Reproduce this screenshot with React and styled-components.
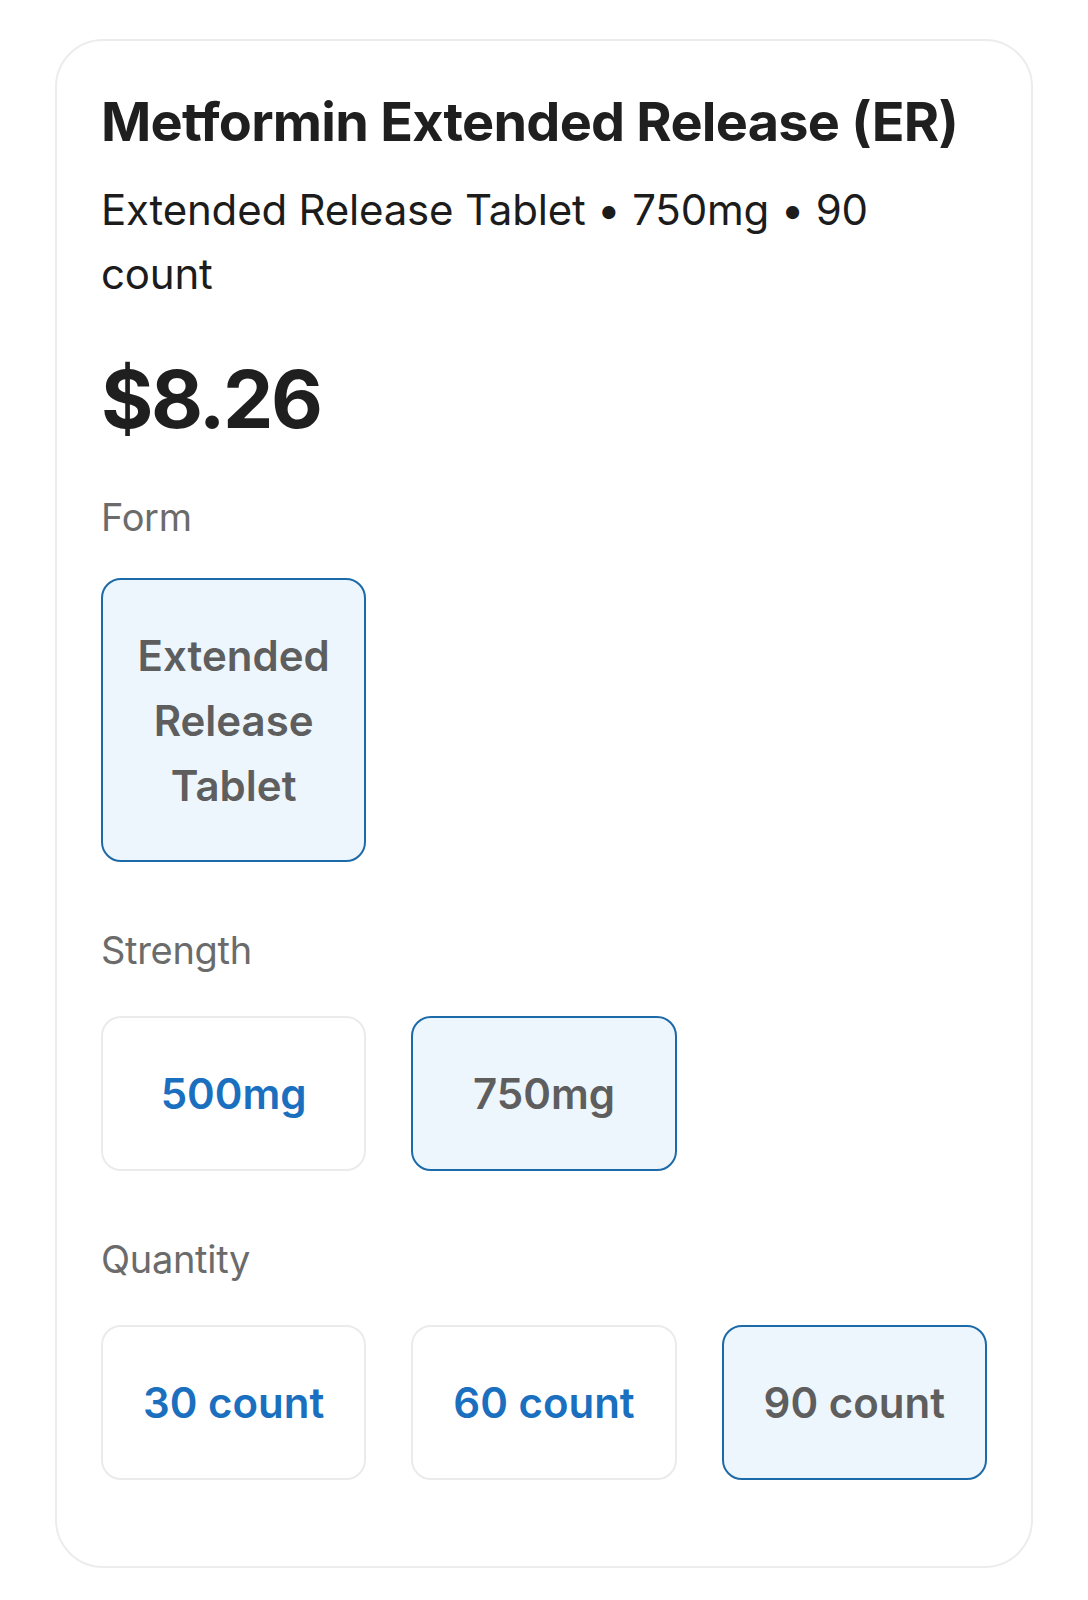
import React from "react";
import styled, { createGlobalStyle } from "styled-components";

const Global = createGlobalStyle`
  html, body { margin: 0; padding: 0; background: #ffffff; }
  body { font-family: Inter, "Noto Sans", sans-serif; -webkit-font-smoothing: antialiased; }
  * { box-sizing: border-box; }
`;

const Page = styled.div`
  padding: 39px 55px 32px 55px;
`;

const Card = styled.section`
  width: 978px;
  border: 2px solid #ececec;
  border-radius: 48px;
  padding: 48px 44px 86px 44px;
  background: #fff;
`;

const Title = styled.h1`
  margin: 0;
  font-size: 54px;
  line-height: 66px;
  font-weight: 700;
  letter-spacing: -0.75px;
  color: #1f1f1f;
`;

const Subtitle = styled.p`
  margin: 23px 0 0;
  max-width: 800px;
  font-size: 42px;
  line-height: 64px;
  font-weight: 400;
  letter-spacing: -0.2px;
  color: #1c1c1c;
`;

const Price = styled.div`
  margin-top: 45px;
  font-size: 80px;
  line-height: 96px;
  font-weight: 700;
  letter-spacing: -2.5px;
  color: #1f1f1f;
`;

const Label = styled.div`
  margin-top: ${(p) => p.$top}px;
  font-size: 38px;
  line-height: 48px;
  font-weight: 400;
  letter-spacing: -0.3px;
  color: #6b6b6b;
`;

const Options = styled.div`
  margin-top: ${(p) => p.$top}px;
  display: grid;
  grid-template-columns: repeat(3, 1fr);
  column-gap: 45px;
`;

const Option = styled.button`
  height: ${(p) => p.$h}px;
  border-radius: 20px;
  border: 2px solid ${(p) => (p.$active ? "#1d6aa8" : "#ebebeb")};
  background: ${(p) => (p.$active ? "#eef6fd" : "#ffffff")};
  color: ${(p) => (p.$active ? "#5e5e5e" : "#1a6fbf")};
  font-family: Inter, "Noto Sans", sans-serif;
  font-size: ${(p) => p.$fs}px;
  line-height: 65px;
  font-weight: 600;
  padding: 0 20px;
  display: flex;
  align-items: center;
  justify-content: center;
  text-align: center;
  cursor: pointer;
`;

const groups = [
  { label: "Form", top: 46, gap: 37, h: 284, fs: 42, items: ["Extended Release Tablet"], active: 0 },
  { label: "Strength", top: 64, gap: 42, h: 155, fs: 42, items: ["500mg", "750mg"], active: 1 },
  { label: "Quantity", top: 64, gap: 42, h: 155, fs: 42, items: ["30 count", "60 count", "90 count"], active: 2 },
];

export default function App() {
  return (
    <Page>
      <Global />
      <Card>
        <Title>Metformin Extended Release (ER)</Title>
        <Subtitle>Extended Release Tablet • 750mg • 90 count</Subtitle>
        <Price>$8.26</Price>
        {groups.map((g) => (
          <div key={g.label}>
            <Label $top={g.top}>{g.label}</Label>
            <Options $top={g.gap}>
              {g.items.map((it, i) => (
                <Option key={it} $h={g.h} $fs={g.fs} $active={i === g.active}>
                  {it}
                </Option>
              ))}
            </Options>
          </div>
        ))}
      </Card>
    </Page>
  );
}
